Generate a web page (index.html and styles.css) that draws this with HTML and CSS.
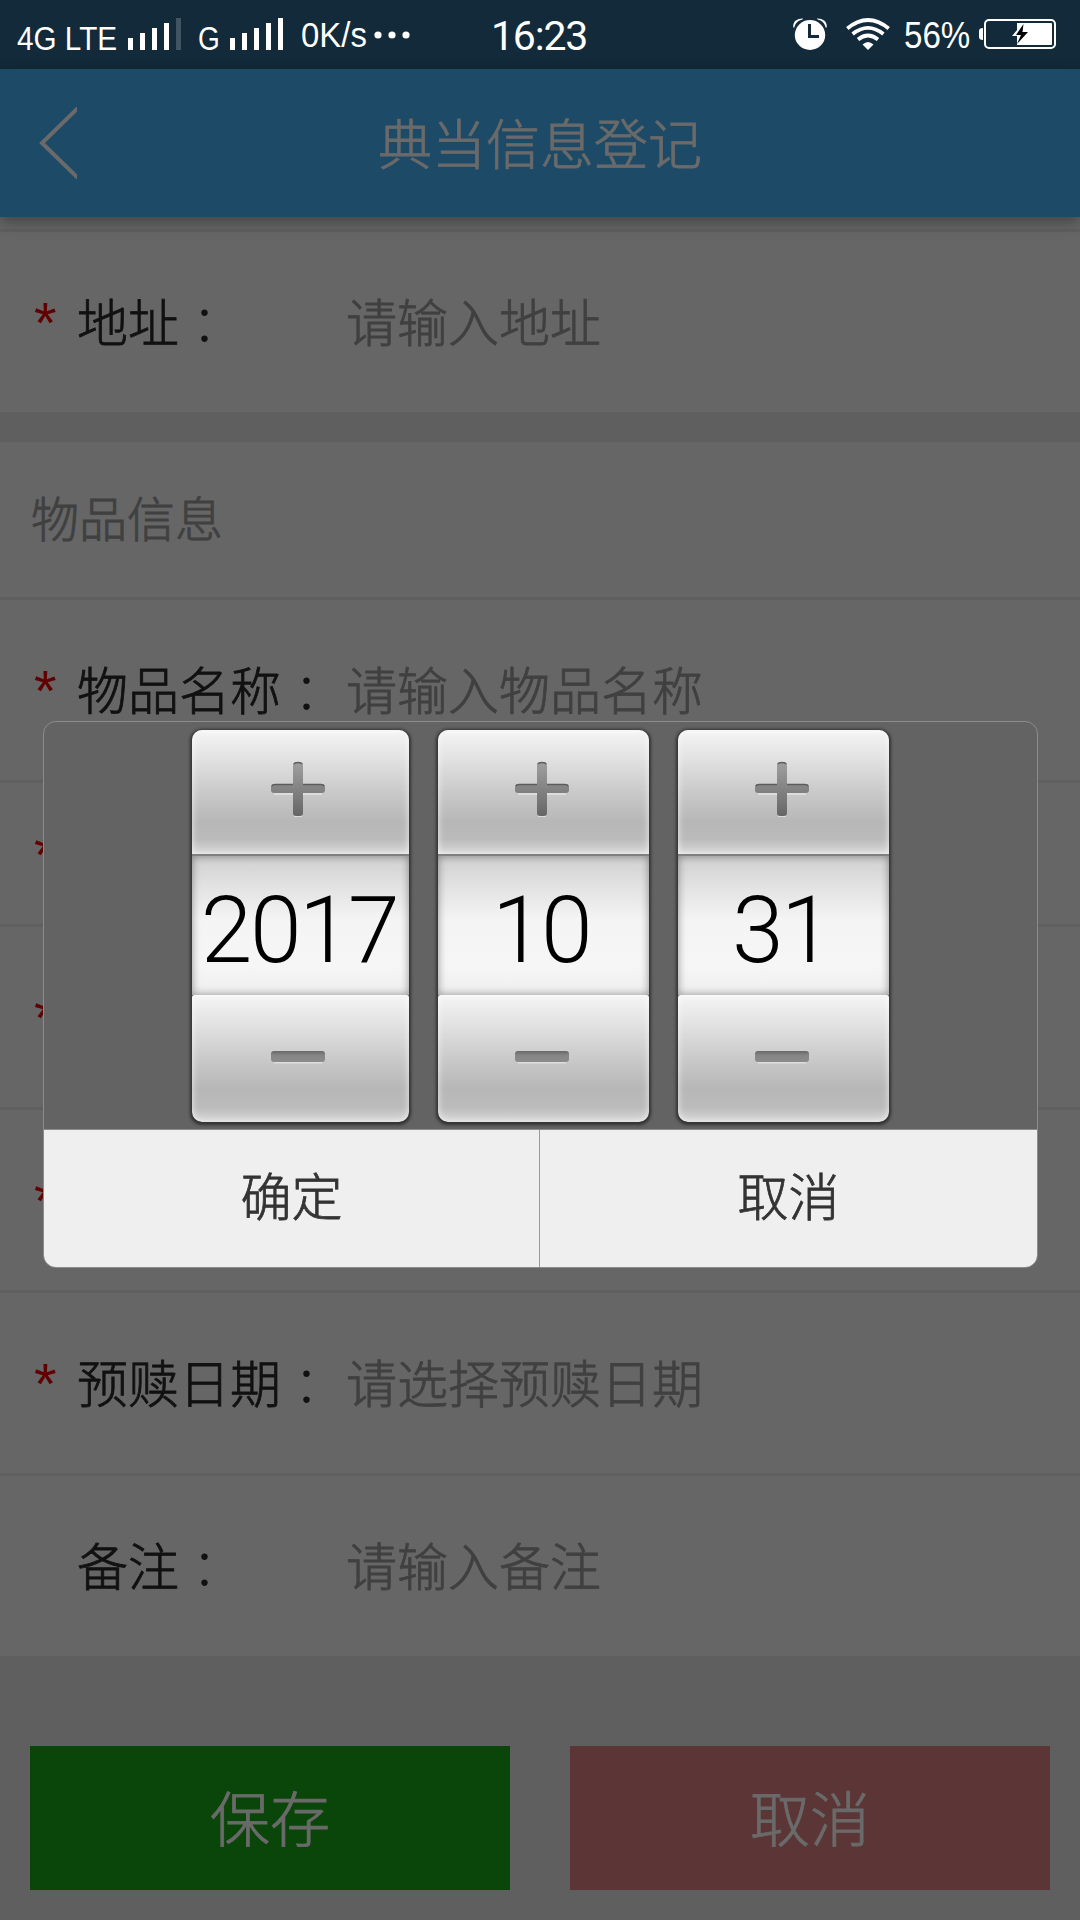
FILE: index.html
```html
<!DOCTYPE html>
<html lang="zh-CN">
<head>
<meta charset="utf-8">
<title>典当信息登记</title>
<link rel="stylesheet" href="styles.css">
</head>
<body>
<div class="screen">
  <div class="status">
    <span class="net">4G LTE</span>
    <svg class="bars" width="53" height="32" viewBox="0 0 53 32"><path fill="#fff" d="M0 20h5v12H0zM12 15h5v17h-5zM24 10h5v22h-5zM36 5h5v27h-5z"/><path fill="#41545f" d="M48 0h5v32h-5z"/></svg>
    <span class="net net-g">G</span>
    <svg class="bars bars-g" width="53" height="32" viewBox="0 0 53 32"><path fill="#fff" d="M0 20h5v12H0zM12 15h5v17h-5zM24 10h5v22h-5zM36 5h5v27h-5zM48 0h5v32h-5z"/></svg>
    <span class="speed">0K/s</span>
    <svg class="dots" width="36" height="8" viewBox="0 0 36 8"><g fill="#fff"><circle cx="4" cy="4" r="3.6"/><circle cx="18" cy="4" r="3.6"/><circle cx="32" cy="4" r="3.6"/></g></svg>
    <span class="time">16:23</span>
    <svg class="alarm" width="34" height="32" viewBox="0 0 34 32"><ellipse cx="17" cy="17" rx="15.2" ry="15" fill="#fff"/><path d="M.3 9.5C-.5 3.500 4 .2 10 .4L9.500 1.500C5 2.500 2.500 5 1.300 9.500zM33.700 9.500C34.500 3.500 30 .2 24 .4L24.500 1.500C29 2.500 31.500 5 32.700 9.500z" fill="#fff"/><path d="M16.500 6v12.500H26" fill="none" stroke="#122a39" stroke-width="3"/></svg>
    <svg class="wifi" width="44" height="32" viewBox="0 0 44 32"><g fill="none" stroke="#fff" stroke-width="3.700"><path d="M1.300 10.500Q22-6.500 42.700 10.500"/><path d="M6.600 16Q22 3.800 37.400 16"/><path d="M12 21.500Q22 13.500 32 21.500"/></g><path d="M16.500 26.500Q22 21.500 27.500 26.500L22 32z" fill="#fff"/></svg>
    <span class="percent">56%</span>
    <svg class="battery" width="77" height="30" viewBox="0 0 77 30"><path d="M4 9Q0 9 0 12v6q0 3 4 3z" fill="#fff"/><rect x="6" y="1" width="70" height="28" rx="4" fill="none" stroke="#fff" stroke-width="2"/><path d="M38 4h34q1 0 1 1v20q0 1-1 1H38zM33 17l5-6v6z" fill="#fff"/><path d="M44.500 5L37 16h5l-4 9 11-12h-5.500z" fill="#000"/></svg>
  </div>
  <header class="header">
    <svg class="back" width="39" height="72" viewBox="0 0 39 72"><path d="M40 1L4 36 40 71" fill="none" stroke="#6a6a6a" stroke-width="4"/></svg>
    <h1>典当信息登记</h1>
  </header>
  <main class="form">
    <div class="strip"></div>
    <div class="row no-line"><i class="star">*</i><span class="label">地址<b lang="zh-TW">：</b></span><span class="hint">请输入地址</span></div>
    <div class="gap"></div>
    <div class="section">物品信息</div>
    <div class="row"><i class="star">*</i><span class="label">物品名称<b lang="zh-TW">：</b></span><span class="hint">请输入物品名称</span></div>
    <div class="row short"><i class="star">*</i></div>
    <div class="row"><i class="star">*</i></div>
    <div class="row"><i class="star">*</i></div>
    <div class="row"><i class="star">*</i><span class="label">预赎日期<b lang="zh-TW">：</b></span><span class="hint">请选择预赎日期</span></div>
    <div class="row no-line"><i class="star"></i><span class="label">备注<b lang="zh-TW">：</b></span><span class="hint">请输入备注</span></div>
  </main>
  <div class="actions">
    <div class="action save">保存</div>
    <div class="action cancel">取消</div>
  </div>

  <svg class="defs" width="0" height="0"><defs>
    <linearGradient id="up" x1="0" y1="0" x2="0" y2="1"><stop offset="0" stop-color="#a0a0a0"/><stop offset="1" stop-color="#666"/></linearGradient>
    <linearGradient id="flat" x1="0" y1="0" x2="0" y2="1"><stop offset="0" stop-color="#686868"/><stop offset=".4" stop-color="#858585"/><stop offset="1" stop-color="#8c8c8c"/></linearGradient>
  </defs></svg>

  <div class="dialog">
    <div class="pickers">
      <div class="picker year">
        <div class="key plus"><svg width="56" height="57" viewBox="0 0 56 57"><path d="M4 33h48M24 55h8" stroke="#ddd" stroke-width="2"/><path d="M26 1h4q3 0 3 3v19h19q3 0 3 3v3q0 3-3 3H33v20q0 3-3 3h-4q-3 0-3-3V32H4q-3 0-3-3v-3q0-3 3-3h19V4q0-3 3-3z" fill="url(#up)"/><path d="M24 3q1-1.500 4-1.500T32 3M2 25q1-1.500 3-1.500h18M33 23.500h18q2 0 3 1.500" fill="none" stroke="#5c5c5c" stroke-width="1.500"/></svg></div>
        <div class="value">2017</div>
        <div class="key minus"><svg width="56" height="14" viewBox="0 0 56 14"><path d="M4 12.500h48" stroke="#ddd" stroke-width="2"/><rect x="1" y="1" width="54" height="11" rx="3" fill="url(#flat)"/></svg></div>
      </div>
      <div class="picker">
        <div class="key plus"><svg width="56" height="57" viewBox="0 0 56 57"><path d="M4 33h48M24 55h8" stroke="#ddd" stroke-width="2"/><path d="M26 1h4q3 0 3 3v19h19q3 0 3 3v3q0 3-3 3H33v20q0 3-3 3h-4q-3 0-3-3V32H4q-3 0-3-3v-3q0-3 3-3h19V4q0-3 3-3z" fill="url(#up)"/><path d="M24 3q1-1.500 4-1.500T32 3M2 25q1-1.500 3-1.500h18M33 23.500h18q2 0 3 1.500" fill="none" stroke="#5c5c5c" stroke-width="1.500"/></svg></div>
        <div class="value">10</div>
        <div class="key minus"><svg width="56" height="14" viewBox="0 0 56 14"><path d="M4 12.500h48" stroke="#ddd" stroke-width="2"/><rect x="1" y="1" width="54" height="11" rx="3" fill="url(#flat)"/></svg></div>
      </div>
      <div class="picker">
        <div class="key plus"><svg width="56" height="57" viewBox="0 0 56 57"><path d="M4 33h48M24 55h8" stroke="#ddd" stroke-width="2"/><path d="M26 1h4q3 0 3 3v19h19q3 0 3 3v3q0 3-3 3H33v20q0 3-3 3h-4q-3 0-3-3V32H4q-3 0-3-3v-3q0-3 3-3h19V4q0-3 3-3z" fill="url(#up)"/><path d="M24 3q1-1.500 4-1.500T32 3M2 25q1-1.500 3-1.500h18M33 23.500h18q2 0 3 1.500" fill="none" stroke="#5c5c5c" stroke-width="1.500"/></svg></div>
        <div class="value">31</div>
        <div class="key minus"><svg width="56" height="14" viewBox="0 0 56 14"><path d="M4 12.500h48" stroke="#ddd" stroke-width="2"/><rect x="1" y="1" width="54" height="11" rx="3" fill="url(#flat)"/></svg></div>
      </div>
    </div>
    <div class="choices"><div class="choice">确定</div><div class="choice">取消</div></div>
  </div>
</div>
</body>
</html>
```
FILE: styles.css
```css
* { box-sizing: border-box; }
body { margin: 0; background: #5f5f5f; }
.screen {
  position: relative;
  width: 1080px;
  height: 1920px;
  overflow: hidden;
  background: #5f5f5f;
  font-family: "Noto Sans CJK SC", sans-serif;
  font-weight: 300;
  -webkit-text-stroke: .8px currentColor;
}
svg { display: block; flex: none; }

.status {
  display: flex;
  align-items: flex-start;
  height: 69px;
  background: #122a39;
  color: #fff;
  font-family: "Liberation Sans", sans-serif;
  font-weight: 400;
  white-space: nowrap;
  -webkit-text-stroke: 0;
}
.status span { flex: none; transform-origin: 0 50%; }
.net { width: 102px; margin-left: 17px; margin-top: 20px; font-size: 33px; line-height: 37px; transform: scaleX(.9); }
.bars { margin: 18px 0 0 9px; }
.net-g { width: 22px; margin-left: 17px; transform: scaleX(.85); }
.bars-g { margin-left: 10px; }
.speed { width: 66px; margin: 14px 0 0 18px; font-size: 35px; line-height: 41px; transform: scaleX(.94); }
.dots { margin: 31px 0 0 7px; }
.time { width: 98px; margin: 12px 0 0 81px; font-family: Roboto, sans-serif; font-size: 41px; line-height: 48px; letter-spacing: -1.200px; }
.alarm { margin: 18px 0 0 204px; }
.wifi { margin: 18px 0 0 19px; }
.percent { width: 68px; margin: 15px 0 0 14px; font-size: 36px; line-height: 41px; transform: scaleX(.92); }
.battery { margin: 19px 0 0 7px; }

.header {
  position: relative;
  z-index: 1;
  display: grid;
  grid-template-columns: 80px 1fr 80px;
  align-items: center;
  height: 148px;
  background: #1d4a66;
  box-shadow: 0 5px 14px rgba(0, 0, 0, .35);
}
.back { margin-left: 38px; }
h1 { margin: 0 0 2px; text-align: center; font-size: 54px; line-height: 80px; font-weight: 300; color: #6a6a6a; }

.form { background: #666; }
.strip { height: 15px; border-bottom: 3px solid #5f5f5f; }
.row {
  display: grid;
  grid-template-columns: 43px 269px 1fr;
  align-items: center;
  height: 183px;
  padding: 0 0 5px 34px;
  border-bottom: 3px solid #5f5f5f;
  font-size: 51px;
  line-height: 74px;
}
.row.no-line { height: 180px; border-bottom: 0; }
.row.short { height: 144px; }
.star { height: 67px; font: normal 400 58px/74px "Liberation Sans", sans-serif; color: #600000; -webkit-text-stroke: 0; }
.label { color: #111; }
.label b { display: inline-block; font-family: "Noto Sans CJK TC", sans-serif; font-weight: 300; transform: translateY(3px); -webkit-text-stroke: 0; }
.hint { color: #404040; }
.gap { height: 30px; background: #5f5f5f; }
.section { height: 158px; padding-left: 31px; border-bottom: 3px solid #5f5f5f; font-size: 48px; line-height: 149px; color: #404040; }

.actions { display: grid; grid-template-columns: 1fr 1fr; gap: 60px; padding: 90px 30px 30px; }
.action { height: 144px; line-height: 139px; text-align: center; font-size: 60px; color: #6a6a6a; }
.save { background: #0a460a; }
.cancel { background: #5c3636; }

.defs { position: absolute; }
.dialog {
  position: absolute;
  z-index: 2;
  left: 43px;
  top: 721px;
  width: 995px;
  height: 547px;
  border: 1px solid #8c8c8c;
  border-radius: 13px;
  overflow: hidden;
  background: #636363;
}
.pickers { display: flex; gap: 29px; height: 407px; padding: 8px 0 0 148px; }
.picker { width: 211px; height: 392px; border-radius: 10px; box-shadow: 0 1px 3px 2px #333; overflow: hidden; }
.picker.year { width: 217px; }
.key { display: flex; justify-content: center; padding-right: 3px; background: linear-gradient(#f5f5f5, #e2e2e2 23%, #c8c8c8 52%, #b7b7b7 74%, #bbb 88%, #d8d8d8); box-shadow: inset 0 0 7px rgba(255, 255, 255, .75); }
.year .key { padding-right: 5px; }
.plus { height: 124px; padding-top: 31px; }
.value {
  height: 141px;
  padding-right: 5px;
  border-top: 2px solid #808080;
  background: linear-gradient(#d0d0d0, #e4e4e4 24%, #f4f4f4 46%, #f6f6f6 80%, #eee);
  box-shadow: inset 0 0 8px rgba(0, 0, 0, .4);
  color: #000;
  text-align: center;
  font: 300 93px/150px Roboto, "Liberation Sans", sans-serif;
  letter-spacing: -2.500px;
  -webkit-text-stroke: 0;
}
.year .value { padding-right: 3px; }
.minus { height: 127px; padding-top: 55px; border-radius: 3px 3px 10px 10px; }
.choices { display: grid; grid-template-columns: 495px 1fr; height: 138px; border-top: 1px solid #8c8c8c; background: #efefef; }
.choice { text-align: center; font-size: 51px; line-height: 129px; color: #333; }
.choice + .choice { border-left: 1px solid #999; }
```
